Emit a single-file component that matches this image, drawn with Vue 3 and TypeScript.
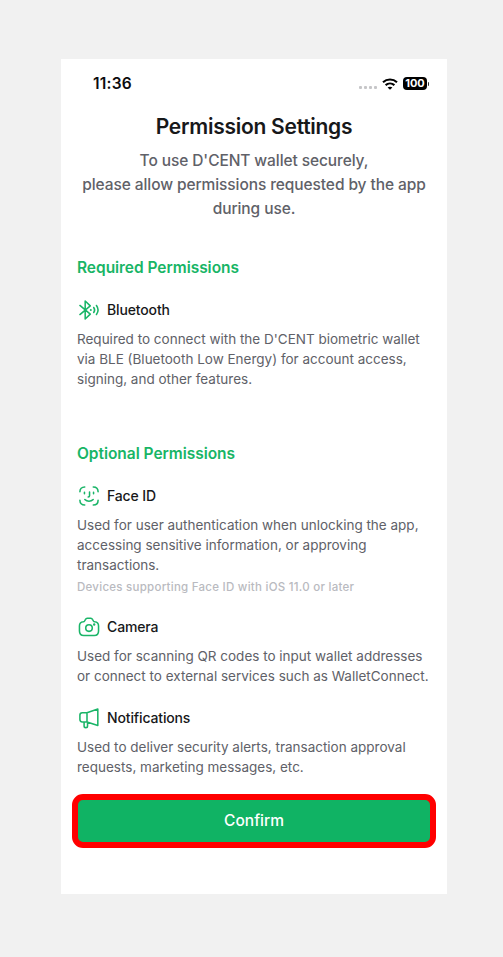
<script setup lang="ts">
interface Permission {
  id: 'bluetooth' | 'face' | 'camera' | 'notifications'
  name: string
  lines: string[]
  note?: string
}

interface Section {
  title: string
  items: Permission[]
}

const intro: string[] = [
  "To use D'CENT wallet securely,",
  'please allow permissions requested by the app',
  'during use.',
]

const sections: Section[] = [
  {
    title: 'Required Permissions',
    items: [
      {
        id: 'bluetooth',
        name: 'Bluetooth',
        lines: [
          "Required to connect with the D'CENT biometric wallet",
          'via BLE (Bluetooth Low Energy) for account access,',
          'signing, and other features.',
        ],
      },
    ],
  },
  {
    title: 'Optional Permissions',
    items: [
      {
        id: 'face',
        name: 'Face ID',
        lines: [
          'Used for user authentication when unlocking the app,',
          'accessing sensitive information, or approving',
          'transactions.',
        ],
        note: 'Devices supporting Face ID with iOS 11.0 or later',
      },
      {
        id: 'camera',
        name: 'Camera',
        lines: [
          'Used for scanning QR codes to input wallet addresses',
          'or connect to external services such as WalletConnect.',
        ],
      },
      {
        id: 'notifications',
        name: 'Notifications',
        lines: [
          'Used to deliver security alerts, transaction approval',
          'requests, marketing messages, etc.',
        ],
      },
    ],
  },
]
</script>

<template>
  <main class="page">
    <div class="phone">
      <header class="status">
        <span class="time">11:36</span>
        <div class="indicators">
          <span class="cell"><i v-for="n in 4" :key="n" /></span>
          <svg class="wifi" viewBox="0 0 16 12">
            <path d="M1 4.3C5 .6 11 .6 15 4.3M3.6 7.1c2.5-2.2 6.3-2.2 8.8 0" />
            <path class="solid" d="M8 11.8 5.6 9.5c1.3-1.1 3.5-1.1 4.8 0z" />
          </svg>
          <span class="battery">100</span>
          <span class="tip" />
        </div>
      </header>

      <h1>Permission Settings</h1>
      <p class="intro">
        <span v-for="line in intro" :key="line" class="line">{{ line }}</span>
      </p>

      <section v-for="section in sections" :key="section.title">
        <h2>{{ section.title }}</h2>
        <article v-for="item in section.items" :key="item.id">
          <h3>
            <svg class="icon" viewBox="1 1 22 22">
              <template v-if="item.id === 'bluetooth'">
                <path d="M2 7 13.400 16.600 7.800 21.900V2.100L13.400 7.400 2 17" />
                <path d="M17.200 9.200q2 2.800 0 5.600M20.200 7q3.600 5 0 10" />
                <circle class="dot" cx="14" cy="12" r="1.100" />
              </template>
              <template v-else-if="item.id === 'face'">
                <path d="M2 7.300C2 4 4 2 7.300 2M16.700 2C20 2 22 4 22 7.300M22 16.700c0 3.300-2 5.300-5.300 5.300M7.300 22C4 22 2 20 2 16.700" />
                <path d="M7 7.800v1.800M17 7.800v1.800M12.600 7.600v4.200q0 1.200-1.500 1.200M7.400 15.800c2.500 2.500 6.700 2.500 9.200 0" />
              </template>
              <template v-else-if="item.id === 'camera'">
                <path d="M7 5.500 8.200 3.600Q8.800 2.400 10 2.400h4q1.200 0 1.800 1.200L17 5.500q.4.6 1.300.8C21.500 6.600 22.500 8.300 22.500 11v5.500c0 3-1.600 4.900-4.700 4.900H6.200c-3.100 0-4.700-1.900-4.700-4.900V11c0-2.700 1-4.400 4.200-4.700Q6.600 6.100 7 5.500Z" />
                <circle cx="12" cy="13.200" r="3.600" />
                <circle class="dot" cx="17.700" cy="9.300" r="1.300" />
              </template>
              <template v-else>
                <path d="M9.800 6.200 21.700 2.200v18l-11.900-3.900ZM9.800 6.200H4.600Q2 6.200 2 8.800v4.900q0 2.600 2.600 2.600h5.200M6.600 16.300v4.400q0 1.900 1.900 1.900t1.900-1.900v-3.900" />
              </template>
            </svg>
            {{ item.name }}
          </h3>
          <p class="desc">
            <span v-for="line in item.lines" :key="line" class="line">{{ line }}</span>
          </p>
          <p v-if="item.note" class="note">{{ item.note }}</p>
        </article>
      </section>

      <button class="confirm" type="button">Confirm</button>
    </div>
  </main>
</template>

<style>
body {
  margin: 0;
  background: #f1f1f1;
}
</style>

<style scoped>
.page {
  box-sizing: border-box;
  min-height: 957px;
  padding: 59px 56px 63px 61px;
  background: #f1f1f1;
  font-family: Inter, "Liberation Sans", sans-serif;
}

.phone {
  box-sizing: border-box;
  height: 835px;
  padding: 0 11px;
  background: #fff;
}

h1, h2, h3, p {
  margin: 0;
}

.line {
  display: block;
  white-space: nowrap;
}

.status {
  display: flex;
  align-items: center;
  justify-content: space-between;
  height: 50px;
  padding: 0 7px 0 21px;
}

.time {
  margin-top: -1px;
  font-size: 15.5px;
  font-weight: 600;
  letter-spacing: 0.2px;
  color: #0c0c0e;
}

.indicators {
  display: flex;
  align-items: center;
}

.cell {
  display: flex;
  gap: 1.7px;
  margin: 7px 5px 0 0;
}

.cell i {
  width: 3.2px;
  height: 3px;
  border-radius: 1px;
  background: #c6c6c8;
}

.wifi {
  width: 16px;
  height: 12px;
  margin: -1px 5px 0 0;
  fill: none;
  stroke: #000;
  stroke-width: 2.1;
}

.wifi .solid {
  fill: #000;
  stroke: none;
}

.battery {
  width: 24px;
  height: 13px;
  margin-top: -1px;
  border-radius: 4px;
  background: #000;
  color: #fff;
  font-size: 11px;
  font-weight: 700;
  line-height: 13px;
  text-align: center;
}

.tip {
  width: 1px;
  height: 4px;
  margin: -1px 0 0 1px;
  border-radius: 0 1px 1px 0;
  background: #333;
}

h1 {
  padding-top: 3px;
  font-size: 21px;
  font-weight: 600;
  line-height: 30px;
  letter-spacing: -0.26px;
  text-align: center;
  color: #17181a;
}

.intro {
  padding-top: 7px;
  font-size: 15.5px;
  font-weight: 500;
  line-height: 24px;
  letter-spacing: -0.09px;
  text-align: center;
  color: #606168;
}

section {
  padding: 35px 5px 0;
}

section + section {
  padding-top: 53px;
}

h2 {
  font-size: 15.5px;
  font-weight: 600;
  line-height: 24px;
  letter-spacing: -0.04px;
  color: #18b566;
}

article {
  padding-top: 18px;
}

article + article {
  padding-top: 20px;
}

h3 {
  display: flex;
  align-items: center;
  gap: 8px;
  font-size: 14px;
  font-weight: 500;
  line-height: 24px;
  letter-spacing: -0.14px;
  color: #17181a;
}

.icon {
  width: 20px;
  height: 20px;
  margin-left: 2px;
  overflow: visible;
  fill: none;
  stroke: #1ab568;
  stroke-width: 1.7;
  stroke-linecap: round;
  stroke-linejoin: round;
}

.icon .dot {
  fill: #1ab568;
  stroke: none;
}

.desc {
  padding-top: 7px;
  font-size: 13.5px;
  line-height: 20px;
  color: #606168;
}

.note {
  padding-top: 4px;
  font-size: 11.5px;
  font-weight: 500;
  line-height: 16px;
  letter-spacing: 0.26px;
  color: #b9bac0;
}

.confirm {
  display: block;
  box-sizing: border-box;
  width: 364px;
  height: 54px;
  margin-top: 17px;
  padding: 0;
  border: 6px solid #f00;
  border-radius: 11px;
  background: #10b364;
  color: #fff;
  font: 500 15.5px/42px Inter, "Liberation Sans", sans-serif;
}
</style>
